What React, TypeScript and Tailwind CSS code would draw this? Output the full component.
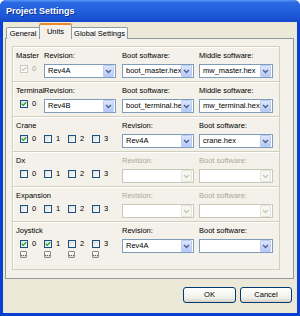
import React from "react";

const Chevron = ({ disabled }: { disabled?: boolean }) => (
  <svg width="7" height="5" viewBox="0 0 7 5">
    <path d="M1 1 L3.5 3.5 L6 1" fill="none" stroke={disabled ? "#C9C7BA" : "#4D6185"} strokeWidth="1.4" />
  </svg>
);

const Select = ({ value, disabled }: { value?: string; disabled?: boolean }) => (
  <div
    className={`h-[14px] flex items-center border bg-white ${
      disabled ? "border-[#C9C7BA]" : "border-[#7F9DB9]"
    }`}
  >
    <span className="flex-1 min-w-0 overflow-hidden whitespace-nowrap pl-[3px] text-[7.5px] leading-none text-black">
      {value}
    </span>
    <div
      className={`w-[11px] h-[12px] mr-px rounded-[1px] flex items-center justify-center border ${
        disabled
          ? "bg-[#F7F7F2] border-[#E6E5DC]"
          : "bg-[linear-gradient(to_bottom,#DCE6FD,#B6CAF8)] border-[#B9CCF5]"
      }`}
    >
      <Chevron disabled={disabled} />
    </div>
  </div>
);

const Check = ({ checked, disabled, label }: { checked?: boolean; disabled?: boolean; label: string }) => (
  <div className="flex items-center">
    <div
      className={`w-[8px] h-[8px] border flex items-center justify-center ${
        disabled
          ? "border-[#CAC8BB] bg-white"
          : "border-[#1C5180] bg-[linear-gradient(135deg,#DCDCD7,#FFFFFF)]"
      }`}
    >
      {checked && (
        <svg width="6" height="6" viewBox="0 0 6 6">
          <path
            d="M0.8 2.8 L2.3 4.4 L5.2 1.2"
            fill="none"
            stroke={disabled ? "#C9C7BA" : "#21A121"}
            strokeWidth="1.3"
          />
        </svg>
      )}
    </div>
    <span className={`ml-[4px] text-[7.5px] leading-none ${disabled ? "text-[#ACA899]" : "text-black"}`}>
      {label}
    </span>
  </div>
);

const Label = ({ children, disabled }: { children: React.ReactNode; disabled?: boolean }) => (
  <div
    className={`h-[9px] text-[7.5px] leading-[9px] whitespace-nowrap ${
      disabled ? "text-[#ACA899]" : "text-black"
    }`}
  >
    {children}
  </div>
);

const Dots = () => (
  <div className="w-[7px] h-[7px] border border-[#8C8C8C] rounded-[1px] bg-[linear-gradient(to_bottom,#FFFFFF,#E3E1D6)] flex items-end justify-center gap-px pb-px">
    <div className="w-px h-px bg-[#555]" />
    <div className="w-px h-px bg-[#555]" />
    <div className="w-px h-px bg-[#555]" />
  </div>
);

const Group = ({ children, tall }: { children: React.ReactNode; tall?: boolean }) => (
  <div
    className={`-mt-px first:mt-0 border border-[#D0D0BF] shadow-[inset_1px_1px_0_#FFFFFF] ${
      tall ? "h-[49px]" : "h-[36px]"
    } pl-[3px] pt-[4px] flex`}
  >
    {children}
  </div>
);

const Col = ({ w, ml, children }: { w: string; ml?: string; children: React.ReactNode }) => (
  <div className={`${w} ${ml ?? ""} flex flex-col`}>{children}</div>
);

const Checks = ({
  items,
  disabled,
  dots,
}: {
  items: boolean[];
  disabled?: boolean;
  dots?: boolean;
}) => (
  <div className="mt-[5px] pl-[4px] flex">
    {items.map((c, i) => (
      <div key={i} className="w-[26px] flex flex-col">
        <Check checked={c} disabled={disabled} label={String(i)} />
        {dots && (
          <div className="mt-[3px]">
            <Dots />
          </div>
        )}
      </div>
    ))}
  </div>
);

const Ctrl = ({ children }: { children: React.ReactNode }) => <div className="mt-[4px]">{children}</div>;

export default function App() {
  return (
    <div className="w-[300px] h-[316px] bg-[#0A3FD3] rounded-t-[6px] flex flex-col font-['Liberation_Sans',Arial,sans-serif] overflow-hidden">
      <div className="h-[22px] shrink-0 flex items-center pl-[6px] rounded-t-[6px] bg-[linear-gradient(to_bottom,#5E9BFA_0%,#2D6BE4_10%,#2360DD_45%,#1B55D5_80%,#1148C9_100%)]">
        <span className="text-white font-bold text-[9px] leading-none [text-shadow:1px_1px_0_#0B2F8F]">
          Project Settings
        </span>
      </div>
      <div className="flex-1 mx-[3px] mb-[3px] bg-[#ECE9D8] flex flex-col">
        <div className="h-[17px] pl-[3px] flex items-end relative z-10 -mb-px">
          <div className="w-[34px] h-[12px] border border-b-0 border-[#919B9C] rounded-t-[2px] bg-[linear-gradient(to_bottom,#FFFFFF,#ECEBE6)] flex items-center justify-center text-[7.5px] leading-none text-black">
            General
          </div>
          <div className="w-[33px] h-[16px] -ml-px border border-b-0 border-[#919B9C] border-t-[2px] border-t-[#E68B2C] rounded-t-[2px] bg-[#F3F1E9] flex items-start pt-[3px] justify-center text-[7.5px] leading-none text-black">
            Units
          </div>
          <div className="w-[57px] h-[12px] -ml-px border border-b-0 border-[#919B9C] rounded-t-[2px] bg-[linear-gradient(to_bottom,#FFFFFF,#ECEBE6)] flex items-center justify-center text-[7.5px] leading-none text-black">
            Global Settings
          </div>
        </div>
        <div className="ml-[2px] w-[289px] h-[241px] border border-[#919B9C] bg-[#F3F1E9] pt-[7px] pl-[6px]">
          <div className="w-[268px] flex flex-col">
            <Group>
              <Col w="w-[28px]">
                <Label>Master</Label>
                <div className="mt-[5px] pl-[4px]">
                  <Check checked disabled label="0" />
                </div>
              </Col>
              <Col w="w-[72px]">
                <Label>Revision:</Label>
                <Ctrl>
                  <Select value="Rev4A" />
                </Ctrl>
              </Col>
              <Col w="w-[72px]" ml="ml-[6px]">
                <Label>Boot software:</Label>
                <Ctrl>
                  <Select value="boot_master.hex" />
                </Ctrl>
              </Col>
              <Col w="w-[74px]" ml="ml-[5px]">
                <Label>Middle software:</Label>
                <Ctrl>
                  <Select value="mw_master.hex" />
                </Ctrl>
              </Col>
            </Group>
            <Group>
              <Col w="w-[28px]">
                <Label>Terminal</Label>
                <div className="mt-[5px] pl-[4px]">
                  <Check checked label="0" />
                </div>
              </Col>
              <Col w="w-[72px]">
                <Label>Revision:</Label>
                <Ctrl>
                  <Select value="Rev4B" />
                </Ctrl>
              </Col>
              <Col w="w-[72px]" ml="ml-[6px]">
                <Label>Boot software:</Label>
                <Ctrl>
                  <Select value="boot_terminal.hex" />
                </Ctrl>
              </Col>
              <Col w="w-[74px]" ml="ml-[5px]">
                <Label>Middle software:</Label>
                <Ctrl>
                  <Select value="mw_terminal.hex" />
                </Ctrl>
              </Col>
            </Group>
            <Group>
              <Col w="w-[100px]">
                <Label>Crane</Label>
                <Checks items={[true, false, false, false]} />
              </Col>
              <Col w="w-[72px]" ml="ml-[6px]">
                <Label>Revision:</Label>
                <Ctrl>
                  <Select value="Rev4A" />
                </Ctrl>
              </Col>
              <Col w="w-[74px]" ml="ml-[5px]">
                <Label>Boot software:</Label>
                <Ctrl>
                  <Select value="crane.hex" />
                </Ctrl>
              </Col>
            </Group>
            <Group>
              <Col w="w-[100px]">
                <Label>Dx</Label>
                <Checks items={[false, false, false, false]} />
              </Col>
              <Col w="w-[72px]" ml="ml-[6px]">
                <Label disabled>Revision:</Label>
                <Ctrl>
                  <Select disabled />
                </Ctrl>
              </Col>
              <Col w="w-[74px]" ml="ml-[5px]">
                <Label disabled>Boot software:</Label>
                <Ctrl>
                  <Select disabled />
                </Ctrl>
              </Col>
            </Group>
            <Group>
              <Col w="w-[100px]">
                <Label>Expansion</Label>
                <Checks items={[false, false, false, false]} />
              </Col>
              <Col w="w-[72px]" ml="ml-[6px]">
                <Label disabled>Revision:</Label>
                <Ctrl>
                  <Select disabled />
                </Ctrl>
              </Col>
              <Col w="w-[74px]" ml="ml-[5px]">
                <Label disabled>Boot software:</Label>
                <Ctrl>
                  <Select disabled />
                </Ctrl>
              </Col>
            </Group>
            <Group tall>
              <Col w="w-[100px]">
                <Label>Joystick</Label>
                <Checks items={[true, true, false, false]} dots />
              </Col>
              <Col w="w-[72px]" ml="ml-[6px]">
                <Label>Revision:</Label>
                <Ctrl>
                  <Select value="Rev4A" />
                </Ctrl>
              </Col>
              <Col w="w-[74px]" ml="ml-[5px]">
                <Label>Boot software:</Label>
                <Ctrl>
                  <Select />
                </Ctrl>
              </Col>
            </Group>
          </div>
        </div>
        <div className="mt-[8px] flex justify-end gap-[4px] pr-[5px]">
          <button className="w-[53px] h-[16px] border border-[#003C74] rounded-[3px] bg-[linear-gradient(to_bottom,#FFFFFF,#F0F0EA_70%,#D6D0C5)] text-[7.5px] leading-none text-black">
            OK
          </button>
          <button className="w-[52px] h-[16px] border border-[#003C74] rounded-[3px] bg-[linear-gradient(to_bottom,#FFFFFF,#F0F0EA_70%,#D6D0C5)] text-[7.5px] leading-none text-black">
            Cancel
          </button>
        </div>
      </div>
    </div>
  );
}
